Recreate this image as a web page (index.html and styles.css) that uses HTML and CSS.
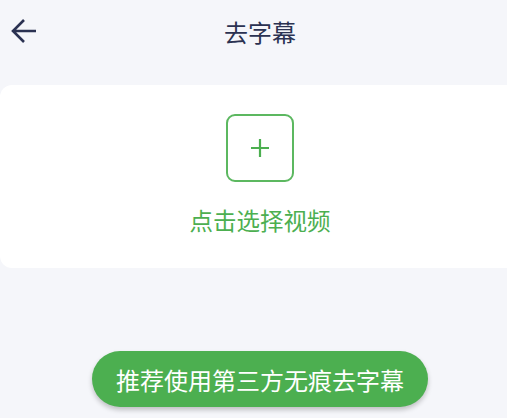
FILE: index.html
```html
<!DOCTYPE html>
<html lang="zh">

<head>
  <meta charset="UTF-8">
  <meta name="viewport" content="width=device-width, initial-scale=1.0">
  <title>去字幕</title>
  <link rel="stylesheet" href="styles.css">
</head>

<body>
  <div id="page">
    <div class="header">
      <svg class="back" width="28" height="28" viewBox="0 0 28 28">
        <path d="M26 14H3M14 3L3 14l11 11" fill="none" stroke="#2b3252" stroke-width="2.6" />
      </svg>
      <h1 class="title">去字幕</h1>
    </div>
    <div class="card">
      <div class="pick">
        <svg width="20" height="20" viewBox="0 0 20 20">
          <path d="M10 1v18M1 10h18" stroke="#4caf50" stroke-width="2.2" />
        </svg>
      </div>
      <p class="pick-text">点击选择视频</p>
    </div>
    <div class="bottom">
      <button class="btn">推荐使用第三方无痕去字幕</button>
    </div>
  </div>
</body>

</html>
```

FILE: styles.css
```css
* {
  margin: 0;
  padding: 0;
  box-sizing: border-box;
}

html,
body {
  background-color: #f5f6fa;
  overflow: hidden;
  font-family: "Noto Sans CJK SC", "Noto Sans", sans-serif;
}

#page {
  width: 520px;
  height: 418px;
  display: flex;
  flex-direction: column;
}

.header {
  position: relative;
  height: 64px;
  display: flex;
  justify-content: center;
  align-items: center;
}

.back {
  position: absolute;
  left: 10px;
  top: 17px;
}

.title {
  font-size: 24px;
  font-weight: 400;
  color: #2b3252;
  margin-top: -2px;
}

.card {
  margin-top: 21px;
  height: 183px;
  background-color: #fff;
  border-radius: 12px;
  display: flex;
  flex-direction: column;
  align-items: center;
  padding-top: 29px;
}

.pick {
  width: 68px;
  height: 68px;
  border: 2px solid #5cb860;
  border-radius: 9px;
  display: flex;
  justify-content: center;
  align-items: center;
}

.pick-text {
  margin-top: 22px;
  font-size: 23.5px;
  color: #4caf50;
  line-height: 32px;
}

.bottom {
  margin-top: 83px;
  display: flex;
  justify-content: center;
}

.btn {
  width: 336px;
  height: 56px;
  border: none;
  border-radius: 28px;
  background-color: #4caf50;
  color: #fff;
  font-family: inherit;
  font-size: 24px;
  box-shadow: 0 3px 5px rgba(0, 0, 0, 0.22);
}
```
